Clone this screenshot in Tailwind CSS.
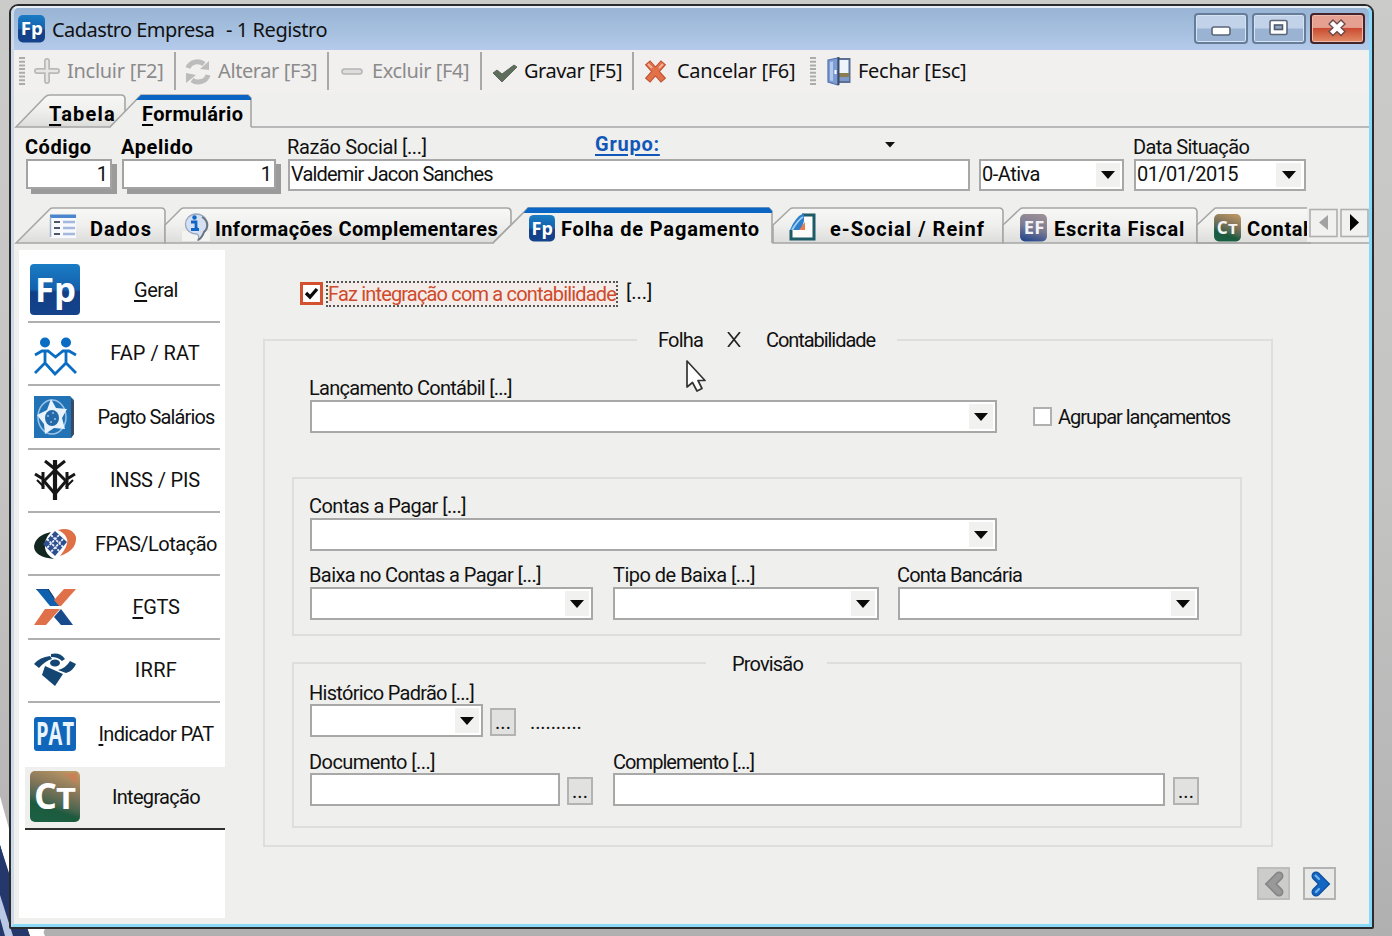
<!DOCTYPE html>
<html lang="pt-BR">
<head>
<meta charset="utf-8">
<title>Cadastro Empresa</title>
<script src="https://cdn.jsdelivr.net/npm/@tailwindcss/browser@4"></script>
</head>
<body class="relative h-[936px] w-[1392px] overflow-hidden bg-[#cacac8] font-['Roboto','Liberation_Sans',sans-serif] text-[20px] leading-[20px] text-[#111] whitespace-nowrap">

<!-- symbols shared by the title bar, tabs and side menu -->
<svg class="absolute h-0 w-0">
  <defs>
    <linearGradient id="blue" x1="0" y1="0" x2="0" y2="1"><stop offset="0" stop-color="#1a7cc4"/><stop offset=".5" stop-color="#1460ac"/><stop offset=".55" stop-color="#123f85"/><stop offset="1" stop-color="#15438c"/></linearGradient>
    <linearGradient id="ctg" x1=".7" y1="0" x2=".35" y2="1"><stop offset="0" stop-color="#b89563"/><stop offset=".35" stop-color="#85765a"/><stop offset=".62" stop-color="#4c6650"/><stop offset=".75" stop-color="#1d5a3e"/><stop offset="1" stop-color="#1b5f42"/></linearGradient>
    <linearGradient id="efg" x1=".6" y1="0" x2=".3" y2="1"><stop offset="0" stop-color="#9a8f97"/><stop offset=".5" stop-color="#7b7a92"/><stop offset="1" stop-color="#26488c"/></linearGradient>
    <linearGradient id="tab" x1="0" y1="0" x2="0" y2="1"><stop offset="0" stop-color="#f8f8f7"/><stop offset=".5" stop-color="#efefee"/><stop offset="1" stop-color="#dcdcdb"/></linearGradient>
    <linearGradient id="desk" x1="0" y1="0" x2="0" y2="1"><stop offset="0" stop-color="#cbcbc9"/><stop offset=".5" stop-color="#c4c4c3"/><stop offset=".8" stop-color="#b9b9b9"/><stop offset="1" stop-color="#b0b0b0"/></linearGradient>
  </defs>
</svg>

<!-- desktop wallpaper -->
<svg class="absolute inset-0" width="1392" height="936" viewBox="0 0 1392 936">
  <rect width="1392" height="936" fill="url(#desk)"/>
  <path d="M0 796C8 826 26 890 45 936H0Z" fill="#fff"/>
  <path d="M0 845C8 875 20 905 30 936H0Z" fill="#24386b"/>
  <path d="M26 926H46L42 936H30Z" fill="#fff"/>
  <path d="M8 870L30 936H12L0 896V845Z" fill="#24386b"/>
  <path d="M0 895L13 936H5L0 918Z" fill="#b9c8e4"/>
</svg>

<!-- window -->
<div class="absolute left-[9px] top-[4px] h-[925px] w-[1365px] rounded-t-[9px] rounded-b-[2px] border-2 border-[#2b2b2d] bg-[#efefed]">
<div class="flex h-full flex-col overflow-hidden rounded-t-[7px] border-t-2 border-r-[3px] border-b-[3px] border-l-[3px] border-t-[#e6edf5] border-r-[#86d9fa] border-b-[#8ad9f7] border-l-[#cbdae6]">

  <!-- title bar -->
  <header class="flex h-[42px] shrink-0 items-start bg-linear-to-b from-[#98b3d3] via-[#a5bfdf] to-[#b5caea]">
    <svg class="mt-[7px] ml-[4px]" width="27" height="28" viewBox="0 0 50 52"><rect width="50" height="51" rx="9" fill="url(#blue)"/><text x="5" y="38" font-family="Open Sans" font-weight="700" font-size="34" fill="#fff" textLength="41" lengthAdjust="spacingAndGlyphs">Fp</text></svg>
    <div class="mt-[12px] ml-[7px] w-[174px] font-['Noto_Sans',sans-serif] tracking-[-0.56px]">Cadastro Empresa</div>
    <div class="mt-[12px] w-[968px] font-['Noto_Sans',sans-serif] tracking-[-0.42px]">- 1 Registro</div>
    <div class="mt-[5px] flex gap-[4px]">
      <div class="h-[31px] w-[54px] rounded-[4px] border-2 border-[#667d9a] bg-linear-to-b from-[#c1d2e9] from-48% to-[#9ab3d2] to-52% shadow-[inset_0_0_0_1px_#d6e3f3]">
        <svg width="50" height="27"><rect x="16" y="12" width="18" height="8" rx="2" fill="#fff" stroke="#5b6678" stroke-width="1.6"/></svg></div>
      <div class="h-[31px] w-[54px] rounded-[4px] border-2 border-[#667d9a] bg-linear-to-b from-[#c1d2e9] from-48% to-[#9ab3d2] to-52% shadow-[inset_0_0_0_1px_#d6e3f3]">
        <svg width="50" height="27"><rect x="16" y="5.500" width="17" height="14" rx="1.5" fill="#fff" stroke="#5b6678" stroke-width="1.6"/><rect x="20.500" y="10" width="8" height="4.500" fill="#8fa6c4" stroke="#4f5a6b" stroke-width="1.6"/></svg></div>
      <div class="h-[31px] w-[55px] rounded-[4px] border-2 border-[#45232a] bg-linear-to-b from-[#e5a092] from-46% via-[#c94b31] via-50% to-[#e08a66] shadow-[inset_0_0_0_1px_#efb9ac]">
        <svg width="51" height="27"><path d="M18.500 6.500L31.500 19M31.500 6.500L18.500 19" stroke="#6b4a4a" stroke-width="7"/><path d="M19.500 7.500L30.500 18M30.500 7.500L19.500 18" stroke="#fff" stroke-width="4.400"/></svg></div>
    </div>
  </header>

  <!-- toolbar -->
  <div class="flex h-[44px] shrink-0 items-start bg-[#f1f0ef] pt-[2px] font-['Noto_Sans',sans-serif] text-[#8b8b8b]">
    <svg class="mt-[5px] ml-[5px]" width="6" height="28"><path d="M3 0V28" stroke="#ababab" stroke-width="6" stroke-dasharray="2 1.700"/></svg>
    <svg class="mt-[6px] ml-[9px]" width="26" height="26"><path d="M13 3V23M3 13H23" stroke="#b9b9b9" stroke-width="6" stroke-linecap="round"/><path d="M13 3V23M3 13H23" stroke="#e6e6e6" stroke-width="2.500" stroke-linecap="round"/></svg>
    <div class="mt-[9px] ml-[7px] w-[107px] tracking-[-0.28px]">Incluir [F2]</div>
    <div class="h-[38px] w-[2px] bg-[#a9a9a9]"></div>
    <svg class="mt-[5px] ml-[8px]" width="28" height="29"><g fill="none" stroke="#bcbcbc" stroke-width="5"><path d="M4 11A10 9 0 0 1 20 7"/><path d="M24 18A10 9 0 0 1 8 23"/></g><path d="M16 12L25 13V4ZM12 18L2 16V26Z" fill="#bcbcbc"/></svg>
    <div class="mt-[9px] ml-[6px] w-[109px] tracking-[-0.4px]">Alterar [F3]</div>
    <div class="h-[38px] w-[2px] bg-[#a9a9a9]"></div>
    <svg class="mt-[16px] ml-[12px]" width="22" height="7"><rect x="1" y="1" width="20" height="5" rx="2.500" fill="#ddd" stroke="#b5b5b5" stroke-width="1.500"/></svg>
    <div class="mt-[9px] ml-[9px] w-[108px] tracking-[-0.4px]">Excluir [F4]</div>
    <div class="h-[38px] w-[2px] bg-[#a9a9a9]"></div>
    <svg class="mt-[12px] ml-[10px]" width="26" height="19"><path d="M1 9L5 6L10 10L22 1L25 3L10 18Z" fill="#5f6d5c" stroke="#4a5848" stroke-width=".8"/></svg>
    <div class="mt-[9px] ml-[6px] w-[108px] tracking-[-0.5px] text-[#111]">Gravar [F5]</div>
    <div class="h-[38px] w-[2px] bg-[#a9a9a9]"></div>
    <svg class="mt-[7px] ml-[9px]" width="26" height="25"><path d="M4.500 3.500L20.500 21.500M20.500 3.500L4.500 21.500" stroke="#b9502d" stroke-width="7"/><path d="M5.200 4.200L19.800 20.800M19.800 4.200L5.200 20.800" stroke="#e2714a" stroke-width="5"/><path d="M5 5L9 9M20 5L16 9" stroke="#f3b29b" stroke-width="2"/></svg>
    <div class="mt-[9px] ml-[8px] w-[133px] tracking-[-0.28px] text-[#111]">Cancelar [F6]</div>
    <svg class="mt-[5px]" width="6" height="28"><path d="M3 0V28" stroke="#ababab" stroke-width="6" stroke-dasharray="2 1.700"/></svg>
    <svg class="mt-[5px] ml-[11px]" width="24" height="29"><rect x="10" y="2" width="12.500" height="23" fill="#eef4fc" stroke="#5c6f94" stroke-width="2"/><path d="M12 16H22V20H12Z" fill="#8a7c52"/><path d="M11 20H22V24H11Z" fill="#7b98c9"/><path d="M1 3L11 1V28L1 25Z" fill="#7e9cd4" stroke="#5372ad" stroke-width="1.200"/><path d="M3 5L6 4.500V24L3 23.500Z" fill="#b4c8ee"/><rect x="7.500" y="13" width="2" height="4" fill="#fff"/><path d="M11.500 0V28" stroke="#3e4c66" stroke-width="2"/></svg>
    <div class="mt-[9px] ml-[7px] tracking-[-0.28px] text-[#111]">Fechar [Esc]</div>
  </div>

  <!-- page tabs -->
  <div class="relative h-[34px] shrink-0">
    <svg class="absolute inset-0" width="1355" height="34" viewBox="14 94 1355 34" fill="none" stroke="#a6a6a6" stroke-width="1.600">
      <path d="M16 127L45 97Q47 95 50 95H121Q125 95 125 99V113L110 127Z" fill="url(#tab)"/>
      <path d="M110 127L138 98L141 95H248L251 98V127" fill="#efefed"/>
      <path d="M251 127H1369"/>
      <path d="M136 100L141 95H248L251 98V100Z" fill="#0b66c3" stroke="none"/>
    </svg>
    <div class="relative flex pt-[10px] pl-[35px] text-[20px] font-bold text-black">
      <div class="w-[93px] tracking-[1.2px]"><span class="underline underline-offset-[3px]">T</span>abela</div>
      <div class="tracking-[0.35px]"><span class="underline underline-offset-[3px]">F</span>ormulário</div>
    </div>
  </div>

  <!-- record header -->
  <div class="flex h-[78px] shrink-0 items-start pl-[12px]">
    <div class="w-[96px] pt-[9px]">
      <div class="-ml-px font-bold tracking-[0.5px] text-black">Código</div>
      <div class="mt-[2px] flex h-[30px] w-[86px] items-start justify-end border-2 border-[#a3a3a3] bg-white pt-[3px] pr-[2px] shadow-[5px_5px_0_#9b9b9b]">1</div>
    </div>
    <div class="w-[166px] pt-[9px]">
      <div class="-ml-px font-bold tracking-[0.6px] text-black">Apelido</div>
      <div class="mt-[2px] flex h-[30px] w-[154px] items-start justify-end border-2 border-[#a3a3a3] bg-white pt-[3px] pr-[2px] shadow-[5px_5px_0_#9b9b9b]">1</div>
    </div>
    <div class="w-[691px] pt-[9px]">
      <div class="flex items-start">
        <div class="-ml-px w-[309px] tracking-[-0.36px]">Razão Social [...]</div>
        <div class="-mt-[3px] -ml-px w-[288px] font-bold tracking-[0.75px] text-[#1257b8]"><span class="underline decoration-2 underline-offset-[3px]">Grupo:</span></div>
        <svg class="mt-[5px] ml-[1px]" width="12" height="6"><path d="M1 0H11L6 5.500Z" fill="#111"/></svg>
      </div>
      <div class="mt-[2px] h-[32px] w-[682px] border-2 border-[#a8a8a8] bg-white pt-[3px] pl-[1px] tracking-[-0.83px]">Valdemir Jacon Sanches</div>
    </div>
    <div class="w-[155px] pt-[31px]">
      <div class="flex h-[32px] w-[145px] justify-between border-2 border-[#a8a8a8] bg-white p-[2px]"><span class="-ml-px pt-px tracking-[-0.5px]">0-Ativa</span><span class="flex w-[24px] items-center justify-center bg-[#f1f1f0]"><svg width="14" height="8"><path d="M0 0H14L7 8Z" fill="#0a0a0a"/></svg></span></div>
    </div>
    <div class="pt-[9px]">
      <div class="-ml-px tracking-[-0.62px]">Data Situação</div>
      <div class="mt-[2px] flex h-[32px] w-[172px] justify-between border-2 border-[#a8a8a8] bg-white p-[2px]"><span class="-ml-px pt-px tracking-[-0.54px]">01/01/2015</span><span class="mr-px flex w-[25px] items-center justify-center bg-[#f1f1f0]"><svg width="14" height="8"><path d="M0 0H14L7 8Z" fill="#0a0a0a"/></svg></span></div>
    </div>
  </div>

  <!-- module tabs -->
  <div class="relative h-[38px] shrink-0">
    <svg class="absolute inset-0" width="1355" height="38" viewBox="14 206 1355 38" fill="none" stroke="#a6a6a6" stroke-width="1.600">
      <path d="M16 243L50 209Q51 208 53 208H161Q165 208 165 212V243Z" fill="url(#tab)"/>
      <path d="M165 243V225L181 209Q182 208 184 208H507Q511 208 511 212V225L493 243Z" fill="url(#tab)"/>
      <path d="M773 243V225L790 209Q791 208 793 208H999Q1003 208 1003 212V243Z" fill="url(#tab)"/>
      <path d="M1003 243V225L1020 209Q1021 208 1023 208H1193Q1197 208 1197 212V243Z" fill="url(#tab)"/>
      <path d="M1310 208H1216Q1215 208 1214 209L1197 225V243H1310Z" fill="url(#tab)"/>
      <path d="M1197 243H1369"/>
      <path d="M493 243L524 212L528 208H769L772 211V243" fill="#efefed"/>
      <path d="M523.500 213L528 207.500H769L772 211V213Z" fill="#0b66c3" stroke="none"/>
      <rect x="1307" y="206" width="62" height="36" fill="#efefed" stroke="none"/>
      <rect x="1310" y="209.500" width="27" height="27" fill="#f1f1f0" stroke="#b0b0b0"/>
      <rect x="1341" y="209.500" width="27" height="27" fill="#f1f1f0" stroke="#b0b0b0"/>
      <path d="M1328 215V230L1319 222.500Z" fill="#a2a2a2" stroke="none"/>
      <path d="M1350 214V231L1359 222.500Z" fill="#050505" stroke="none"/>
    </svg>
    <div class="relative flex w-[1293px] items-start overflow-hidden font-bold text-black">
      <svg class="mt-[8px] ml-[35px] shrink-0" width="28" height="25"><rect x="1" y="2" width="26" height="22" fill="#f7f9fc"/><path d="M1 0.500H27V4H1Z" fill="#4b86cc"/><path d="M1.500 3V23" stroke="#9fb2c8" stroke-width="1.500"/><path d="M5 8H11M5 14H11M5 20H11" stroke="#4d5866" stroke-width="2.200"/><path d="M14 8H26M14 14H26M14 20H26" stroke="#a3b8da" stroke-width="2.600"/></svg>
      <div class="mt-[13px] ml-[13px] w-[92px] shrink-0 tracking-[1.1px]">Dados</div>
      <svg class="mt-[6px] shrink-0" width="28" height="29"><rect x="0" y="19" width="28" height="10" fill="#f3f3f2"/><path d="M14 2A12 10.500 0 0 1 22 20Q20 26 16 28Q18 24 15 22A11 10 0 1 1 14 2Z" fill="#d5e1f2" stroke="#9ba9bf" stroke-width="1.300"/><path d="M20 5A12 10 0 0 1 22 20Q20 26 16 28" fill="none" stroke="#6c7480" stroke-width="2"/><circle cx="12.500" cy="5.500" r="2.200" fill="#1165c4"/><path d="M9 10H14V17H16M9 17.500H17" fill="none" stroke="#1165c4" stroke-width="2.800"/></svg>
      <div class="mt-[13px] ml-[5px] w-[314px] shrink-0 tracking-[0.4px]">Informações Complementares</div>
      <svg class="mt-[9px] shrink-0" width="26" height="27" viewBox="0 0 50 52"><rect width="50" height="51" rx="9" fill="url(#blue)"/><text x="5" y="38" font-family="Open Sans" font-weight="700" font-size="34" fill="#fff" textLength="41" lengthAdjust="spacingAndGlyphs">Fp</text></svg>
      <div class="mt-[13px] ml-[6px] w-[228px] shrink-0 tracking-[0.83px]">Folha de Pagamento</div>
      <svg class="mt-[7px] shrink-0" width="27" height="28"><path d="M13 2H25V26H2V17" fill="#fbfbfa" stroke="#1d5b66" stroke-width="3"/><path d="M1 17Q6 4 15 0V8L12 17Z" fill="#2c7fcb"/><path d="M3 17Q9 7 14 4" stroke="#9fcdf2" stroke-width="2" fill="none"/><path d="M10 17L16 9V17Z" fill="#e87c50"/></svg>
      <div class="mt-[13px] ml-[14px] w-[190px] shrink-0 tracking-[1.02px]">e-Social / Reinf</div>
      <svg class="mt-[8px] shrink-0" width="27" height="28" viewBox="0 0 50 52"><rect width="50" height="51" rx="9" fill="url(#efg)"/><text x="7" y="38" font-family="Open Sans" font-weight="700" font-size="34" fill="#f3f3f5" textLength="38" lengthAdjust="spacingAndGlyphs">EF</text></svg>
      <div class="mt-[13px] ml-[7px] w-[160px] shrink-0 tracking-[0.8px]">Escrita Fiscal</div>
      <svg class="mt-[8px] shrink-0" width="27" height="28" viewBox="0 0 50 52"><rect width="50" height="51" rx="9" fill="url(#ctg)"/><text x="5" y="37" font-family="Open Sans" font-weight="700" font-size="32" fill="#f3f3f3">C</text><text x="26" y="37" font-family="Open Sans" font-weight="700" font-size="25" fill="#f3f3f3" textLength="18" lengthAdjust="spacingAndGlyphs">T</text></svg>
      <div class="mt-[13px] ml-[6px] shrink-0 tracking-[0.6px]">Contabil</div>
    </div>
  </div>

  <!-- body -->
  <div class="flex min-h-0 grow">
    <nav class="mt-[6px] ml-[5px] h-[668px] w-[206px] bg-white pt-[9.4px]">
      <div class="ml-[9px] flex h-[63.4px] w-[192px] items-center border-b-2 border-[#b0b0b0]">
        <svg class="ml-[2px] shrink-0" width="50" height="52" viewBox="0 0 50 52"><rect width="50" height="51" rx="4" fill="url(#blue)"/><text x="5" y="38" font-family="Open Sans" font-weight="700" font-size="34" fill="#fff" textLength="41" lengthAdjust="spacingAndGlyphs">Fp</text></svg>
        <div class="ml-[7px] w-[138px] shrink-0 text-center tracking-[-0.47px]"><span class="underline underline-offset-[3px]">G</span>eral</div>
      </div>
      <div class="ml-[9px] flex h-[63.4px] w-[192px] items-center border-b-2 border-[#b0b0b0]">
        <svg class="mt-[5px] ml-[6px] shrink-0" width="44" height="40" fill="none" stroke="#0b6cc4" stroke-width="2.800"><circle cx="11" cy="6.500" r="5" fill="#0b6cc4" stroke="none"/><circle cx="32" cy="6.500" r="5" fill="#0b6cc4" stroke="none"/><path d="M1 19L8 15H14L21.500 21L29 15H35L42 19M11 15V27L1 37M11 27L21 38L32 27L42 37M32 15V27"/></svg>
        <div class="ml-[8px] w-[138px] shrink-0 text-center">FAP / RAT</div>
      </div>
      <div class="ml-[9px] flex h-[63.4px] w-[192px] items-center border-b-2 border-[#b0b0b0]">
        <svg class="ml-[6px] shrink-0" width="41" height="42"><path d="M0 0H36L40 4V38L37 42H0Z" fill="#2273b5"/><path d="M37 2L40 6V38L37 42Z" fill="#3b4a63"/><ellipse cx="18" cy="21" rx="14" ry="17" fill="none" stroke="#9cc3e6" stroke-width="1.500"/><path d="M17 3L22 12L33 13L28 22L31 33L20 32L11 38L10 28L3 19L13 14Z" fill="#e9f3fb"/><ellipse cx="18" cy="22" rx="7" ry="8" fill="#2669a8"/><path d="M13 20H15M18 17H20M20 23H22M16 26H18" stroke="#8fc0e8" stroke-width="1.500"/></svg>
        <div class="ml-[12px] w-[138px] shrink-0 text-center tracking-[-0.88px]">Pagto Salários</div>
      </div>
      <div class="ml-[9px] flex h-[63.4px] w-[192px] items-center border-b-2 border-[#b0b0b0]">
        <svg class="ml-[6px] shrink-0" width="42" height="42" fill="none" stroke="#161616" stroke-width="3"><path d="M21 1V41" stroke-width="4.200"/><path d="M11 2L21 10L31 2M21 11L10 22L21 35L32 22Z"/><path d="M1 15L9 20M9 13V30M33 13V30M41 15L33 20"/><path d="M3 21L10 28M39 21L32 28" stroke-width="2"/></svg>
        <div class="ml-[10px] w-[138px] shrink-0 text-center tracking-[-0.16px]">INSS / PIS</div>
      </div>
      <div class="ml-[9px] flex h-[63.4px] w-[192px] items-center border-b-2 border-[#b0b0b0]">
        <svg class="ml-[6px] shrink-0" width="43" height="32"><path d="M17 4Q2 7 0 18Q0 29 20 31Q12 27 11 20Q10 11 17 4Z" fill="#12271f"/><path d="M24 2Q38-2 42 9Q43 22 26 28Q35 17 33 11Q31 5 24 2Z" fill="#df6f45"/><path d="M21 3L33 14L21 28L9 16Z" fill="#2d4f8f"/><path d="M17 7L29 19M13 11L25 23M25 7L13 20M29 11L17 24" stroke="#e8eefa" stroke-width="1.800" stroke-dasharray="2.500 1.200"/></svg>
        <div class="ml-[10px] w-[138px] shrink-0 text-center tracking-[-0.5px]">FPAS/Lotação</div>
      </div>
      <div class="ml-[9px] flex h-[63.4px] w-[192px] items-center border-b-2 border-[#b0b0b0]">
        <svg class="ml-[6px] shrink-0" width="42" height="36"><path d="M2 0H14L26 17H16Z" fill="#1160ad"/><path d="M30 0H42L27 17H25L20 11Z" fill="#e0704a"/><path d="M11 20H26L12 36H0Z" fill="#e0704a"/><path d="M27 20L39 36H27L20 28Z" fill="#174b8c"/><path d="M2 0H14L20 9" fill="none" stroke="#173f70" stroke-width="1.200"/></svg>
        <div class="ml-[11px] w-[138px] shrink-0 text-center tracking-[-0.33px]"><span class="underline underline-offset-[3px]">F</span>GTS</div>
      </div>
      <div class="ml-[9px] flex h-[63.4px] w-[192px] items-center border-b-2 border-[#b0b0b0]">
        <svg class="ml-[6px] shrink-0" width="42" height="34" fill="#134673"><path d="M0 11Q6 4 16 3L18 6Q11 8 5 15Z"/><path d="M17 1Q26-1 31 6L28 8Q24 4 17 4Z"/><ellipse cx="21" cy="10" rx="5" ry="3.500"/><path d="M36 8L42 11Q39 18 32 20L24 17Q32 15 36 8Z"/><path d="M11 13L29 21L21 33L8 22Z"/></svg>
        <div class="ml-[11px] w-[138px] shrink-0 text-center tracking-[0.3px]">IRRF</div>
      </div>
      <div class="ml-[9px] flex h-[63.4px] w-[192px] items-center pb-[2px]">
        <svg class="ml-[6px] shrink-0 overflow-visible" width="42" height="34"><rect width="42" height="34" rx="3" fill="#0f66bb"/><text x="2" y="28" font-family="Open Sans" font-weight="700" font-size="32" fill="#e9f4fd" textLength="38" lengthAdjust="spacingAndGlyphs">PAT</text></svg>
        <div class="ml-[11px] w-[138px] shrink-0 text-center tracking-[-0.65px]"><span class="underline underline-offset-[3px]">I</span>ndicador PAT</div>
      </div>
      <div class="ml-[6px] flex h-[63.4px] w-[200px] items-center border-b-2 border-[#303030] bg-[#efefed]">
        <svg class="ml-[5px] shrink-0" width="50" height="52" viewBox="0 0 50 52"><rect width="50" height="51" rx="5" fill="url(#ctg)"/><path d="M34 3L47 2V14Z" fill="#d07a54" opacity=".7"/><text x="4" y="38" font-family="Open Sans" font-weight="700" font-size="36" fill="#fff">C</text><text x="26" y="38" font-family="Open Sans" font-weight="700" font-size="28" fill="#fff" textLength="20" lengthAdjust="spacingAndGlyphs">T</text></svg>
        <div class="ml-[7px] w-[138px] shrink-0 text-center tracking-[-0.69px]">Integração</div>
      </div>
    </nav>

    <main class="flex w-[1144px] flex-col">
      <div class="mt-[37px] ml-[75px] flex h-[26px] items-start">
        <div class="mt-px flex h-[23px] w-[23px] items-center justify-center border-[3px] border-[#d4512f] bg-white"><svg width="15" height="15"><path d="M2 7L6 11L13 3" fill="none" stroke="#0a0a0a" stroke-width="3.400"/></svg></div>
        <div class="ml-[3px] h-[26px] w-[292px] border-2 border-dotted border-[#555] bg-[#f4ece8] pt-px tracking-[-0.83px] text-[#cf4a2b]">Faz integração com a contabilidade</div>
        <div class="ml-[8px] pt-px">[...]</div>
      </div>

      <section class="relative mt-[32px] ml-[38px] flex h-[508px] w-[1010px] flex-col border-2 border-[#dededd] pt-[37px]">
        <div class="absolute -top-[11px] left-[372px] flex w-[260px] bg-[#efefed] pl-[21px]">
          <span class="w-[69px] tracking-[-0.8px]">Folha</span>
          <svg class="mt-[2px]" width="14" height="15"><path d="M1 0L13 15M13 0L1 15" stroke="#222" stroke-width="1.700"/></svg>
          <span class="ml-[25px] tracking-[-1.06px]">Contabilidade</span>
        </div>
        <div class="ml-[44px] tracking-[-0.73px]">Lançamento Contábil [...]</div>
        <div class="mt-[2px] ml-[45px] flex items-start">
          <div class="flex h-[33px] w-[687px] justify-end border-2 border-[#a8a8a8] bg-white p-[2px]"><span class="flex w-[24px] items-center justify-center bg-[#f1f1f0]"><svg width="14" height="8"><path d="M0 0H14L7 8Z" fill="#0a0a0a"/></svg></span></div>
          <div class="mt-[7px] ml-[36px] h-[19px] w-[19px] border-2 border-[#b0b0b0] bg-white"></div>
          <div class="mt-[7px] ml-[6px] tracking-[-1.02px]">Agrupar lançamentos</div>
        </div>

        <div class="mt-[44px] ml-[27px] flex h-[159px] w-[950px] flex-col border-2 border-[#dededd] pt-[17px] pl-[15px]">
          <div class="tracking-[-0.53px]">Contas a Pagar [...]</div>
          <div class="mt-[2px] ml-px flex h-[33px] w-[687px] justify-end border-2 border-[#a8a8a8] bg-white p-[2px]"><span class="flex w-[24px] items-center justify-center bg-[#f1f1f0]"><svg width="14" height="8"><path d="M0 0H14L7 8Z" fill="#0a0a0a"/></svg></span></div>
          <div class="mt-[14px] flex">
            <div class="w-[304px] tracking-[-0.59px]">Baixa no Contas a Pagar [...]</div>
            <div class="w-[284px] tracking-[-0.51px]">Tipo de Baixa [...]</div>
            <div class="tracking-[-0.79px]">Conta Bancária</div>
          </div>
          <div class="mt-[2px] ml-px flex">
            <div class="flex h-[33px] w-[283px] justify-end border-2 border-[#a8a8a8] bg-white p-[2px]"><span class="flex w-[24px] items-center justify-center bg-[#f1f1f0]"><svg width="14" height="8"><path d="M0 0H14L7 8Z" fill="#0a0a0a"/></svg></span></div>
            <div class="ml-[20px] flex h-[33px] w-[266px] justify-end border-2 border-[#a8a8a8] bg-white p-[2px]"><span class="flex w-[24px] items-center justify-center bg-[#f1f1f0]"><svg width="14" height="8"><path d="M0 0H14L7 8Z" fill="#0a0a0a"/></svg></span></div>
            <div class="ml-[19px] flex h-[33px] w-[301px] justify-end border-2 border-[#a8a8a8] bg-white p-[2px]"><span class="flex w-[24px] items-center justify-center bg-[#f1f1f0]"><svg width="14" height="8"><path d="M0 0H14L7 8Z" fill="#0a0a0a"/></svg></span></div>
          </div>
        </div>

        <div class="relative mt-[26px] ml-[27px] flex h-[166px] w-[950px] flex-col border-2 border-[#dededd] pt-[19px] pl-[15px]">
          <div class="absolute -top-[10px] left-[412px] w-[121px] bg-[#efefed] pl-[26px] tracking-[-0.83px]">Provisão</div>
          <div class="tracking-[-0.7px]">Histórico Padrão [...]</div>
          <div class="mt-[1px] ml-px flex items-start">
            <div class="flex h-[33px] w-[173px] justify-end border-2 border-[#a8a8a8] bg-white p-[2px]"><span class="flex w-[24px] items-center justify-center bg-[#f1f1f0]"><svg width="14" height="8"><path d="M0 0H14L7 8Z" fill="#0a0a0a"/></svg></span></div>
            <div class="mt-[4px] ml-[7px] flex h-[28px] w-[26px] justify-center border-2 border-[#b3b3b3] bg-[#e1e1e0] pt-[2px]">...</div>
            <div class="mt-[8px] ml-[14px] tracking-[-0.1px]">..........</div>
          </div>
          <div class="mt-[15px] flex">
            <div class="w-[304px] tracking-[-0.56px]">Documento [...]</div>
            <div class="tracking-[-0.94px]">Complemento [...]</div>
          </div>
          <div class="mt-[1px] ml-px flex items-start">
            <div class="h-[33px] w-[250px] border-2 border-[#a8a8a8] bg-white"></div>
            <div class="mt-[4px] ml-[7px] flex h-[28px] w-[26px] justify-center border-2 border-[#b3b3b3] bg-[#e1e1e0] pt-[2px]">...</div>
            <div class="ml-[20px] h-[33px] w-[552px] border-2 border-[#a8a8a8] bg-white"></div>
            <div class="mt-[4px] ml-[8px] flex h-[28px] w-[26px] justify-center border-2 border-[#b3b3b3] bg-[#e1e1e0] pt-[2px]">...</div>
          </div>
        </div>
      </section>

      <div class="mt-[20px] ml-[1032px] flex gap-[13px]">
        <div class="h-[33px] w-[33px] border-2 border-[#bdbdbd] bg-[#cccccb]"><svg width="29" height="29"><path d="M20 7L12 15L20 23" fill="none" stroke="#868686" stroke-width="9" stroke-linecap="round"/><path d="M20 7L12 15L20 23" fill="none" stroke="#999" stroke-width="5.500" stroke-linecap="round"/></svg></div>
        <div class="h-[33px] w-[33px] border-2 border-[#b3b3b3] bg-[#e9e9e8]"><svg width="29" height="29"><path d="M11 7L19 15L11 23" fill="none" stroke="#0c4f9e" stroke-width="9" stroke-linecap="round"/><path d="M11 7L19 15L11 23" fill="none" stroke="#1267c2" stroke-width="6.500" stroke-linecap="round"/><path d="M10.500 6.500L14 10M11 23L14 20" stroke="#7db5ef" stroke-width="2" stroke-linecap="round"/></svg></div>
      </div>
    </main>
  </div>
</div>
</div>

<!-- mouse pointer -->
<svg class="absolute left-[684px] top-[358px]" width="24" height="36"><path d="M3 3V29L8.500 24.500L13 33L18 30.500L14 22.500H21Z" fill="#fff" stroke="#333" stroke-width="1.700" stroke-linejoin="round"/></svg>
</body>
</html>
